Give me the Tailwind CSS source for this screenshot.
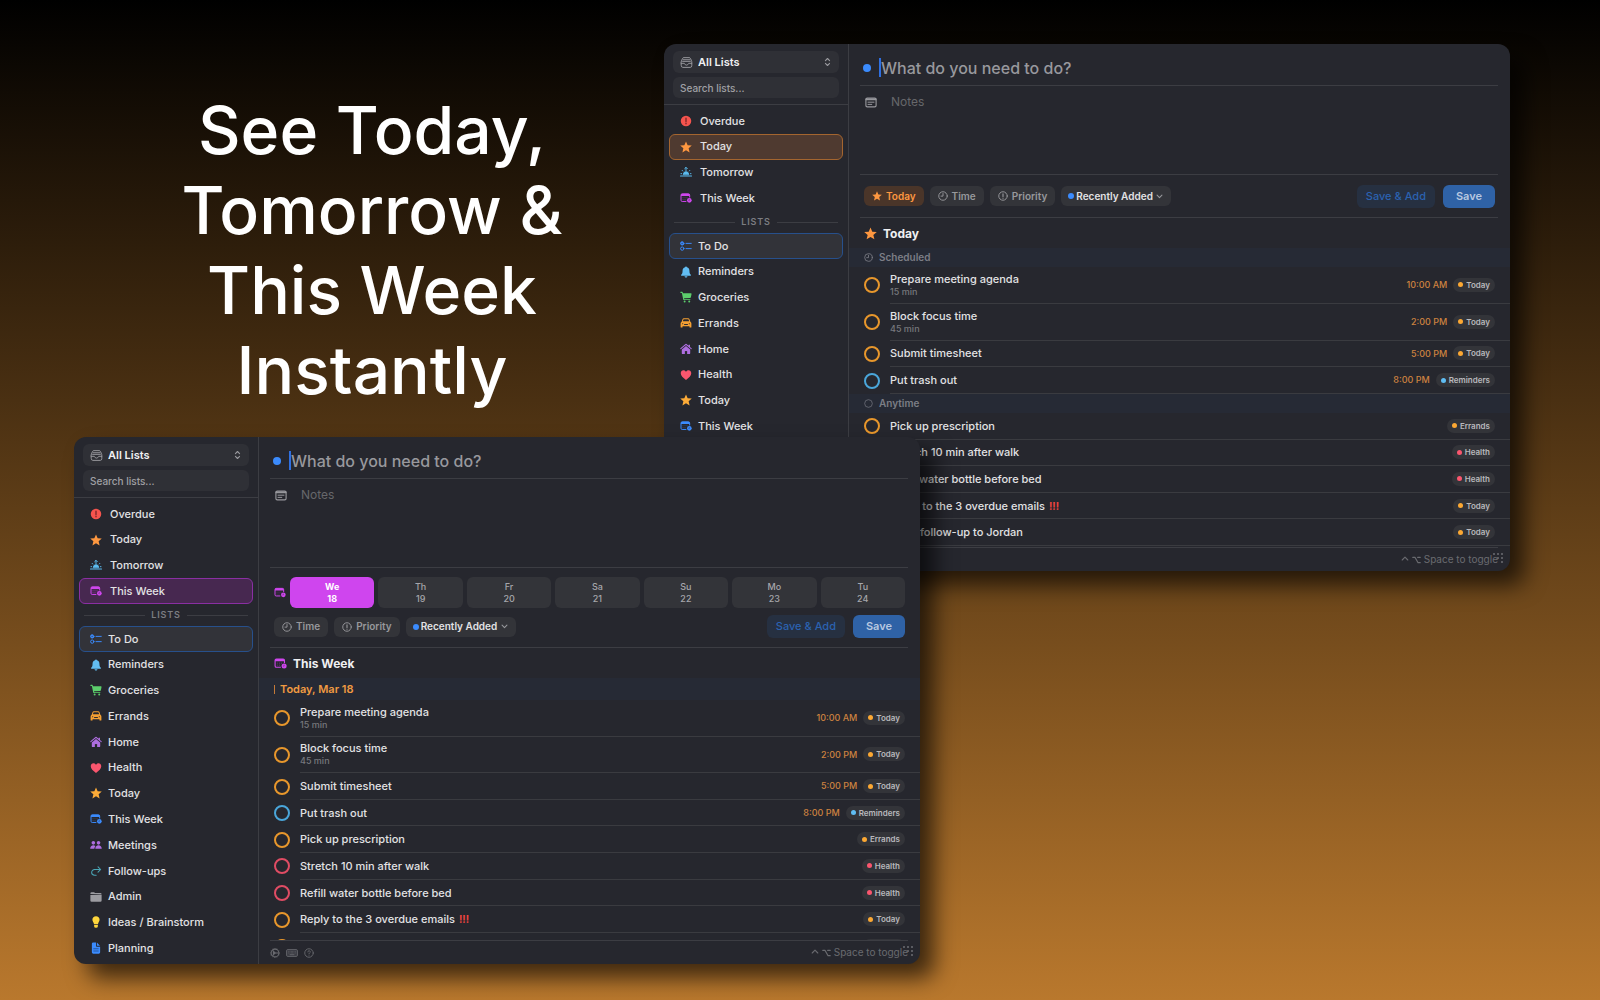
<!DOCTYPE html>
<html lang="en">
<head>
  <meta charset="utf-8">
  <title>See Today, Tomorrow &amp; This Week Instantly</title>
  <script src="https://cdn.jsdelivr.net/npm/@tailwindcss/browser@4"></script>
</head>
<body class="font-['Inter',sans-serif] antialiased">

  <!-- Icon set -->
  <svg class="hidden">
    <symbol id="tray" viewBox="0 0 16 16" fill="none" stroke="currentColor" stroke-width="1.2" stroke-linejoin="round" stroke-linecap="round">
      <path d="M1.5 7 3 3.2Q3.500 2 4.800 2h6.400q1.300 0 1.800 1.200L14.500 7v5q0 2-2 2h-9q-2 0-2-2z"/>
      <path d="M4 4.600h8M3.200 6.600h9.600M1.500 9h3.700q.5 0 .6.600a2.300 2.300 0 0 0 4.400 0q.1-.6.6-.6h3.700"/>
    </symbol>
    <symbol id="updown" viewBox="0 0 8 12" fill="none" stroke="currentColor" stroke-width="1.3" stroke-linecap="round" stroke-linejoin="round">
      <path d="M1.500 4.300 4 1.800l2.500 2.500M1.500 7.700 4 10.200l2.500-2.500"/>
    </symbol>
    <symbol id="alert" viewBox="0 0 16 16">
      <circle cx="8" cy="8" r="7" fill="currentColor"/>
      <path d="M8 4.200v4.600M8 11v.6" stroke="#7c2528" stroke-width="1.800" stroke-linecap="round"/>
    </symbol>
    <symbol id="star" viewBox="0 0 16 16" fill="currentColor">
      <path d="M8 .5l2.200 5.200 5.500.4-4.200 3.600 1.300 5.500L8 12.300l-4.800 2.900 1.300-5.500L.3 6.100l5.500-.4z"/>
    </symbol>
    <symbol id="sunrise" viewBox="0 0 18 16" fill="none" stroke="currentColor" stroke-width="1.400" stroke-linecap="round" stroke-linejoin="round">
      <path d="M9 6V1.300M7 3l2-2 2 2M3.300 5.600l.8.900M14.700 5.600l-.8.900M1.500 10.500h1M15.500 10.500h1"/>
      <path d="M5 11.500a4 4 0 0 1 8 0z" fill="currentColor"/>
      <path d="M.8 14h16.400" stroke-width="1.800"/>
    </symbol>
    <symbol id="calendar" viewBox="0 0 18 16">
      <path d="M9.500 13.200H3.300q-1.800 0-1.800-1.800V3.600q0-1.800 1.800-1.800h9.400q1.800 0 1.800 1.800v3.600" fill="none" stroke="currentColor" stroke-width="1.500"/>
      <path d="M1.500 5V3.300q0-1.500 1.800-1.500h9.400q1.800 0 1.800 1.500V5z" fill="currentColor"/>
      <path d="M4 7.500h1M7 7.500h1M10 7.500h1M4 10.300h1M7 10.300h1" stroke="currentColor" stroke-width="1.200" opacity=".6"/>
      <circle cx="14" cy="11.500" r="3.500" fill="currentColor"/>
      <path d="M14 9.700v2h-1.300" fill="none" stroke="#26272e" stroke-width=".8" opacity=".7"/>
    </symbol>
    <symbol id="checklist" viewBox="0 0 16 14" fill="none" stroke="currentColor" stroke-width="1.300" stroke-linecap="round">
      <circle cx="3" cy="3.500" r="2.200" fill="currentColor"/>
      <circle cx="3" cy="10.500" r="2.200"/>
      <path d="M8 3.500h7M8 10.500h7"/>
      <path d="M2.200 3.500l.6.700 1.100-1.400" stroke="#303138" stroke-width=".7"/>
    </symbol>
    <symbol id="bell" viewBox="0 0 16 16" fill="currentColor">
      <path d="M8 .6c.8 0 1.300.5 1.300 1.200 2.100.6 3.300 2.400 3.300 4.700 0 2.700.5 3.600 1.600 4.700.8.900.3 1.700-.6 1.700H2.400c-.9 0-1.400-.8-.6-1.700 1.100-1.100 1.600-2 1.600-4.700 0-2.300 1.200-4.100 3.300-4.700C6.700 1.100 7.200.6 8 .6zM6 13.700h4c-.2 1-1 1.700-2 1.700s-1.800-.7-2-1.700z"/>
    </symbol>
    <symbol id="cart" viewBox="0 0 16 16" fill="currentColor">
      <path d="M.4 1.800q0-.7.700-.7h1.700q.7 0 .9.800l.2 1h10.700q1 0 .8 1l-.9 4.300q-.2 1-1.200 1.100l-7.900.5.100.6q.1.500.6.500h7.300q.6 0 .6.600t-.6.600H5.600q-1.200 0-1.400-1.200L2.500 2.500H1.100q-.7 0-.7-.7z"/>
      <circle cx="6.200" cy="14" r="1.300"/><circle cx="12.300" cy="14" r="1.300"/>
    </symbol>
    <symbol id="car" viewBox="0 0 16 14">
      <path d="M3.200 2.200Q3.700.6 5.300.6h5.400q1.600 0 2.100 1.600l1 3q1.400.8 1.400 2.500v4.500q0 .8-.8.800h-1q-.8 0-.8-.8v-.9H3.400v.9q0 .8-.8.800h-1q-.8 0-.8-.8V7.700q0-1.700 1.400-2.500z" fill="currentColor"/>
      <path d="M4.400 2.600q.2-.7.900-.7h5.400q.7 0 .9.700l.6 2H3.800z" fill="#26272e"/>
      <path d="M6 9h4M3.500 8h.2M12.300 8h.2" stroke="#26272e" stroke-width="1.300" stroke-linecap="round"/>
    </symbol>
    <symbol id="home" viewBox="0 0 16 16">
      <path d="M7.300 1.200q.7-.6 1.400 0L11.500 3.600V2.300h1.800v2.900l2.100 1.800q.5.500.1 1t-1 .1L8 2.700 1.500 8.100q-.6.400-1-.1t.1-1z" fill="currentColor"/>
      <path d="M8 3.900l5.600 4.700v4.900q0 1.300-1.300 1.300H3.700q-1.300 0-1.300-1.300V8.600z" fill="currentColor"/>
      <path d="M6.500 14.800v-4h3v4z" fill="#26272e"/>
    </symbol>
    <symbol id="heart" viewBox="0 0 16 16" fill="currentColor">
      <path d="M8 14.600C4 11.600 1 9 1 5.600c0-2.200 1.600-3.900 3.600-3.900 1.500 0 2.700.8 3.400 2.100.7-1.300 1.900-2.100 3.400-2.100 2 0 3.600 1.700 3.600 3.900 0 3.400-3 6-7 9z"/>
    </symbol>
    <symbol id="people" viewBox="0 0 18 14" fill="currentColor">
      <circle cx="5" cy="3.800" r="2.700"/><circle cx="12.800" cy="3.800" r="2.700"/>
      <path d="M.3 12.200c0-2.600 2-4.700 4.700-4.700 1.300 0 2.400.4 3.200 1.200-1.100 1-1.700 2.300-1.600 4.100H.9q-.6 0-.6-.6zM8 12.200c0-2.600 2-4.700 4.800-4.700 2.700 0 4.800 2.100 4.800 4.700q0 .6-.6.600H8.600q-.6 0-.6-.6z"/>
    </symbol>
    <symbol id="followup" viewBox="0 0 16 14" fill="none" stroke="currentColor" stroke-width="1.400" stroke-linecap="round" stroke-linejoin="round">
      <path d="M14 5H6.200a4 4 0 0 0-4 4q0 3.500 4 3.600h2M10.700 1.500 14.200 5l-3.500 3.500"/>
    </symbol>
    <symbol id="folder" viewBox="0 0 16 14" fill="currentColor">
      <path d="M.5 3V2.500q0-1.700 1.700-1.700h3q.7 0 1.200.5l.6.500h6.800q1.700 0 1.700 1.700v.3zM.5 4.300h15v7.200q0 1.700-1.700 1.700H2.200q-1.700 0-1.700-1.700z"/>
    </symbol>
    <symbol id="bulb" viewBox="0 0 16 16" fill="currentColor">
      <path d="M8 .3c2.800 0 4.800 2 4.800 4.700 0 2.200-1.700 3.100-2 5.300q-.1.700-.8.700H6q-.7 0-.8-.7C4.900 8.100 3.200 7.200 3.200 5 3.200 2.300 5.200.3 8 .3zM5.500 11.900h5v1.700q0 2-2.500 2t-2.500-2z"/>
    </symbol>
    <symbol id="document" viewBox="0 0 16 16">
      <path d="M2.500 2.300q0-1.800 1.800-1.800H8v4.700q0 1 1 1h4.500v7.500q0 1.800-1.800 1.800H4.300q-1.800 0-1.800-1.800z" fill="currentColor"/>
      <path d="M9.200.7 13.300 5H9.700q-.5 0-.5-.5z" fill="currentColor"/>
      <path d="M5 9h6M5 12h6" stroke="#1d4c8f" stroke-width="1.100" stroke-linecap="round"/>
    </symbol>
    <symbol id="note" viewBox="0 0 16 14" fill="none" stroke="currentColor" stroke-linecap="round">
      <rect x="1.200" y="1.200" width="13.600" height="11.600" rx="1.800" stroke-width="1.500"/>
      <path d="M1.500 2.800h13" stroke-width="2.200"/>
      <path d="M4 6.600h8M4 9.500h5" stroke-width="1.300"/>
    </symbol>
    <symbol id="clock" viewBox="0 0 16 16" fill="none" stroke="currentColor" stroke-width="1.500" stroke-linecap="round">
      <circle cx="8" cy="8" r="6.800"/><path d="M8 4v4.200H4.800"/>
    </symbol>
    <symbol id="priority" viewBox="0 0 16 16" fill="none" stroke="currentColor" stroke-width="1.500" stroke-linecap="round">
      <circle cx="8" cy="8" r="6.800"/><path d="M8 4.500v4.300M8 11.200v.2" stroke-width="1.800"/>
    </symbol>
    <symbol id="chevron" viewBox="0 0 10 6" fill="none" stroke="currentColor" stroke-width="1.500" stroke-linecap="round" stroke-linejoin="round">
      <path d="M1.500 1 5 4.600 8.500 1"/>
    </symbol>
    <symbol id="circle" viewBox="0 0 16 16" fill="none" stroke="currentColor" stroke-width="1.200">
      <circle cx="8" cy="8" r="6.800"/>
    </symbol>
    <symbol id="gear" viewBox="0 0 16 16" fill="none" stroke="currentColor" stroke-width="1.700">
      <circle cx="8" cy="8" r="6.200"/><circle cx="8" cy="8" r="7.300" stroke-width="1" stroke-dasharray="1.400 1.460"/>
      <path d="M6.500 8h7.300M6.500 8 4.300 3.200M6.500 8l-2.200 4.800"/><circle cx="6.600" cy="8" r="1.400" fill="currentColor"/>
    </symbol>
    <symbol id="keyboard" viewBox="0 0 18 12">
      <rect x=".8" y=".8" width="16.400" height="10.400" rx="2" fill="currentColor" fill-opacity=".35" stroke="currentColor" stroke-width="1.200"/>
      <path d="M3.500 4h11M3.500 6h11" stroke="currentColor" stroke-width="1" stroke-dasharray="1 1"/>
      <path d="M5.500 8.500h7" stroke="currentColor" stroke-width="1.200"/>
    </symbol>
    <symbol id="help" viewBox="0 0 16 16" fill="none" stroke="currentColor" stroke-width="1.400" stroke-linecap="round">
      <circle cx="8" cy="8" r="6.800"/><path d="M6.200 6.300a1.900 1.900 0 1 1 2.700 1.700q-.9.500-.9 1.200M8 11.400v.1"/>
    </symbol>
    <symbol id="grip" viewBox="0 0 10 10" fill="currentColor">
      <circle cx="1" cy="1" r="1"/><circle cx="5" cy="1" r="1"/><circle cx="9" cy="1" r="1"/>
      <circle cx="5" cy="5" r="1"/><circle cx="9" cy="5" r="1"/><circle cx="9" cy="9" r="1"/>
    </symbol>
    <symbol id="option" viewBox="0 0 12 10" fill="none" stroke="currentColor" stroke-width="1.400" stroke-linecap="round" stroke-linejoin="round">
      <path d="M1 1.500h3L8 8.500h3M7.500 1.500H11"/>
    </symbol>
    <symbol id="control" viewBox="0 0 10 10" fill="none" stroke="currentColor" stroke-width="1.400" stroke-linecap="round" stroke-linejoin="round">
      <path d="M1.500 5 5 1.500 8.500 5"/>
    </symbol>
  </svg>

  <main class="relative min-h-screen overflow-hidden bg-linear-to-b/srgb from-black to-[#b9782d]">
    <h1 class="ml-[74px] w-[596px] pt-[90px] text-center text-[66px] leading-[80px] font-medium text-white">
      See Today,<br>Tomorrow &amp;<br>This Week<br>Instantly
    </h1>

    <section id="today-window" aria-label="Today" class="absolute top-[44px] left-[664px] flex h-[527px] w-[846px] overflow-hidden rounded-xl bg-[#26272e] shadow-[14px_14px_22px_rgba(0,0,0,0.65)]"></section>
    <section id="week-window" aria-label="This Week" class="absolute top-[437px] left-[74px] flex h-[527px] w-[846px] overflow-hidden rounded-xl bg-[#26272e] shadow-[14px_14px_22px_rgba(0,0,0,0.65)]"></section>
  </main>

  <script>
    const icon = (name, cls) => `<svg class="shrink-0 ${cls}" aria-hidden="true"><use href="#${name}"/></svg>`;

    const smartLists = [
      ['Overdue', 'alert', 'text-[#f5544e]'],
      ['Today', 'star', 'text-[#fd9740]'],
      ['Tomorrow', 'sunrise', 'text-[#5bbcf0]'],
      ['This Week', 'calendar', 'text-[#cf46ee]'],
    ];
    const lists = [
      ['To Do', 'checklist', 'text-[#3b8bfd]'],
      ['Reminders', 'bell', 'text-[#62bdf2]'],
      ['Groceries', 'cart', 'text-[#5cce6c]'],
      ['Errands', 'car', 'text-[#f5a033]'],
      ['Home', 'home', 'text-[#ae6ee0]'],
      ['Health', 'heart', 'text-[#f9566e]'],
      ['Today', 'star', 'text-[#fcab38]'],
      ['This Week', 'calendar', 'text-[#3b8bfd]'],
      ['Meetings', 'people', 'text-[#ae6ee0]'],
      ['Follow-ups', 'followup', 'text-[#4aa5b5]'],
      ['Admin', 'folder', 'text-[#9c9ca1]'],
      ['Ideas / Brainstorm', 'bulb', 'text-[#fdd53c]'],
      ['Planning', 'document', 'text-[#3b8bfd]'],
    ];
    const selected = {
      Today: 'border-[#a4652f] bg-[#4f3a30]',
      'This Week': 'border-[#8a2fa3] bg-[#472850]',
    };
    const dots = {
      Today: 'bg-[#fca833]', Errands: 'bg-[#fca833]', Reminders: 'bg-[#5fbdf3]', Health: 'bg-[#fa566e]',
    };
    const rings = {
      Today: 'border-[#e8972c]', Errands: 'border-[#e8972c]', Reminders: 'border-[#4aa6da]', Health: 'border-[#e04c64]',
    };

    const scheduled = [
      { title: 'Prepare meeting agenda', sub: '15 min', time: '10:00 AM', list: 'Today' },
      { title: 'Block focus time', sub: '45 min', time: '2:00 PM', list: 'Today' },
      { title: 'Submit timesheet', time: '5:00 PM', list: 'Today' },
      { title: 'Put trash out', time: '8:00 PM', list: 'Reminders' },
    ];
    const anytime = [
      { title: 'Pick up prescription', list: 'Errands' },
      { title: 'Stretch 10 min after walk', list: 'Health' },
      { title: 'Refill water bottle before bed', list: 'Health' },
      { title: 'Reply to the 3 overdue emails', urgent: true, list: 'Today' },
      { title: 'Send follow-up to Jordan', list: 'Today' },
    ];

    const navItem = ([name, glyph, color], box, gap) => `
      <li class="flex min-h-0 flex-1">
        <a href="#" class="flex w-full items-center rounded-md border pl-[10px] ${gap} ${box}">
          ${icon(glyph, `h-3 w-3 ${color}`)}${name}
        </a>
      </li>`;

    const sidebar = (active) => `
      <nav class="flex w-[185px] shrink-0 flex-col border-r border-[#3c3d43] text-[11px] font-medium text-[#e2e2e4]">
        <div class="flex flex-col gap-1 border-b border-[#3c3d43] px-[9px] pt-[7px] pb-[6px]">
          <label class="relative flex h-[22px] items-center rounded-md bg-[#2f3036]">
            <span class="pointer-events-none absolute left-[7px] text-[#98989d]">${icon('tray', 'h-[13px] w-[13px]')}</span>
            <select aria-label="List group" class="h-full w-full appearance-none pl-[25px] font-semibold text-[#f0f0f2]"><option>All Lists</option></select>
            <span class="pointer-events-none absolute right-2 text-[#98989d]">${icon('updown', 'h-[10px] w-[7px]')}</span>
          </label>
          <input type="search" aria-label="Search lists" placeholder="Search lists..." class="h-[21px] rounded-md bg-[#2f3036] px-[7px] text-[10px] placeholder:text-[#a0a0a5]">
        </div>
        <ul class="mx-[5px] mt-[3px] flex h-[103px] flex-col">
          ${smartLists.map(l => navItem(l, l[0] === active ? selected[active] : 'border-transparent', 'gap-2')).join('')}
        </ul>
        <div class="mx-[10px] flex h-[22px] items-center gap-[6px] text-[9px] leading-3 font-semibold tracking-widest text-[#7c7d82]">
          <hr class="flex-1 border-[#3c3d43]">LISTS<hr class="flex-1 border-[#3c3d43]">
        </div>
        <ul class="mx-[5px] mb-[3px] flex min-h-0 flex-1 flex-col">
          ${lists.map((l, i) => navItem(l, i ? 'border-transparent' : 'border-[#27508c] bg-[#323339]', 'gap-[6px]')).join('')}
        </ul>
      </nav>`;

    const taskRow = (t) => `
      <li class="flex min-h-0 pl-[15px] ${t.sub ? 'flex-[11_1_0%]' : 'flex-[8_1_0%]'}">
        <label class="flex min-w-0 flex-1 items-center gap-[10px]">
          <input type="checkbox" class="h-4 w-4 shrink-0 appearance-none rounded-full border-2 ${rings[t.list]}">
          <span class="flex h-full flex-1 items-center border-b border-[#3a3b40] pr-[15px]">
            <span class="flex-1">
              <span class="block text-[11px] leading-[14px] font-medium text-[#e2e2e4]">${t.title}${t.urgent ? '<b class="ml-1 text-[10px] font-bold text-[#f0443f]">!!!</b>' : ''}</span>
              ${t.sub ? `<span class="block text-[9px] leading-3 font-medium text-[#77787d]">${t.sub}</span>` : ''}
            </span>
            ${t.time ? `<time class="mr-[6px] text-[9px] font-medium text-[#cd8240]">${t.time}</time>` : ''}
            <span class="flex h-[14px] items-center gap-[3px] rounded-full bg-[#333439] px-[5px] text-[8px] font-semibold text-[#b9b9bd]">
              <i class="h-[5px] w-[5px] rounded-full ${dots[t.list]}"></i>${t.list}
            </span>
          </span>
        </label>
      </li>`;

    const chip = (glyph, text, cls) => `
      <button class="flex h-5 items-center gap-[4px] rounded-md px-2 ${cls}">${icon(glyph, 'h-[10px] w-[10px]')}${text}</button>`;

    const toolbar = (first) => `
      <div class="flex items-center gap-[6px] px-[15px] text-[10px] font-semibold">
        ${first}
        ${chip('clock', 'Time', 'bg-[#333439] text-[#97989c]')}
        ${chip('priority', 'Priority', 'bg-[#333439] text-[#97989c]')}
        <label class="relative flex h-5 items-center rounded-md bg-[#333439]">
          <i class="pointer-events-none absolute left-[7px] h-[6px] w-[6px] rounded-full bg-[#3b8bfd]"></i>
          <select aria-label="Sort order" class="h-full appearance-none pr-[18px] pl-[15px] text-[#e2e2e4]"><option>Recently Added</option></select>
          <span class="pointer-events-none absolute right-2 text-[#97989c]">${icon('chevron', 'h-[5px] w-[7px]')}</span>
        </label>
        <button class="ml-auto h-[23px] rounded-md bg-[#263041] px-[9px] text-[11px] font-medium text-[#2b62b0]">Save &amp; Add</button>
        <button class="ml-[2px] h-[23px] rounded-md bg-[#2f62a6] px-[13px] text-[11px] text-[#b8c8e0]">Save</button>
      </div>`;

    const panel = (tools, body) => `
      <div class="flex min-w-0 flex-1 flex-col">
        <label class="mr-3 ml-[11px] flex h-[42px] items-center border-b border-[#3c3d43] pt-[6px]">
          <i class="ml-[3px] h-2 w-2 rounded-full bg-[#3b8bfd]"></i>
          <i class="ml-2 h-[19px] w-[2px] bg-[#2f6fe0]"></i>
          <input aria-label="Task" placeholder="What do you need to do?" class="min-w-0 flex-1 text-[16px] font-medium placeholder:text-[#98989d]">
        </label>
        <label class="mr-3 ml-[11px] flex h-[89px] border-b border-[#3c3d43] pt-2 pl-[5px] text-[#98989d]">
          ${icon('note', 'mt-[3px] h-[11px] w-3')}
          <textarea aria-label="Notes" placeholder="Notes" class="ml-[14px] flex-1 resize-none text-[12px] leading-4 placeholder:text-[#66676b]"></textarea>
        </label>
        ${tools}
        <div class="flex min-h-0 flex-1 flex-col overflow-hidden">${body}</div>
        <footer class="mr-3 ml-[11px] flex h-[24px] shrink-0 items-center gap-[6px] border-t border-[#3c3d43] text-[10px] text-[#6a6b70]">
          ${icon('gear', 'h-[10px] w-[10px]')}${icon('keyboard', 'h-[8px] w-3')}${icon('help', 'h-[10px] w-[10px]')}
          <span class="ml-auto flex items-center gap-[3px]">${icon('control', 'h-2 w-2')}${icon('option', 'h-2 w-[9px]')}Space to toggle</span>
        </footer>
        <span class="absolute right-[7px] bottom-[8px] text-[#6d6e73]">${icon('grip', 'h-[10px] w-[10px]')}</span>
      </div>`;

    const group = (height, tasks) => `<ul class="flex shrink-0 flex-col ${height}">${tasks.map(taskRow).join('')}</ul>`;
    const heading = (glyph, color, text) => `
      <h2 class="flex h-[30px] shrink-0 items-center gap-[6px] pt-px pl-[15px] text-[12px] font-bold text-[#f0f0f2]">${icon(glyph, `h-[13px] w-[13px] ${color}`)}${text}</h2>`;
    const band = (glyph, text) => `
      <h3 class="flex h-[19px] shrink-0 items-center gap-[6px] bg-[#262a35] pl-[15px] text-[10px] font-semibold text-[#7c7e86]">${icon(glyph, 'h-[9px] w-[9px]')}${text}</h3>`;

    const days = [['We', 18], ['Th', 19], ['Fr', 20], ['Sa', 21], ['Su', 22], ['Mo', 23], ['Tu', 24]];

    document.getElementById('today-window').innerHTML = sidebar('Today') + panel(
      `<div class="flex h-[42px] flex-col justify-center">${toolbar(chip('star', 'Today', 'bg-[#4a3529] text-[#fd9740]'))}</div>
      <hr class="mr-3 ml-[11px] border-[#3c3d43]">`,
      heading('star', 'text-[#fd9740]', 'Today') +
      band('clock', 'Scheduled') + group('h-[127px]', scheduled) +
      band('circle', 'Anytime') + group('h-[133px]', anytime)
    );

    document.getElementById('week-window').innerHTML = sidebar('This Week') + panel(
      `<div class="flex items-center gap-1 pt-[9px] pr-[15px] pb-[7px] pl-[15px]">
        ${icon('calendar', 'h-[11px] w-[12px] text-[#cf46ee]')}
        ${days.map(([d, n], i) => `
          <button class="h-[31px] flex-1 rounded-md text-[9px] leading-3 ${i ? 'bg-[#333439] font-medium text-[#a6a6ab]' : 'bg-[#cf45ee] font-bold text-white'}">${d}<br>${n}</button>`).join('')}
      </div>
      ${toolbar('')}
      <hr class="mt-[9px] mr-3 ml-[11px] border-[#3c3d43]">`,
      heading('calendar', 'text-[#cf46ee]', 'This Week') +
      `<h3 class="flex h-[22px] shrink-0 items-center gap-[5px] bg-[#262a35] pl-[15px] text-[11px] font-semibold text-[#f09a42]"><i class="h-[9px] w-px bg-[#c47a38]"></i>Today, Mar 18</h3>` +
      group('h-[233px]', [...scheduled, ...anytime.slice(0, 4)]) +
      group('h-[27px]', anytime.slice(4))
    );
  </script>
</body>
</html>
